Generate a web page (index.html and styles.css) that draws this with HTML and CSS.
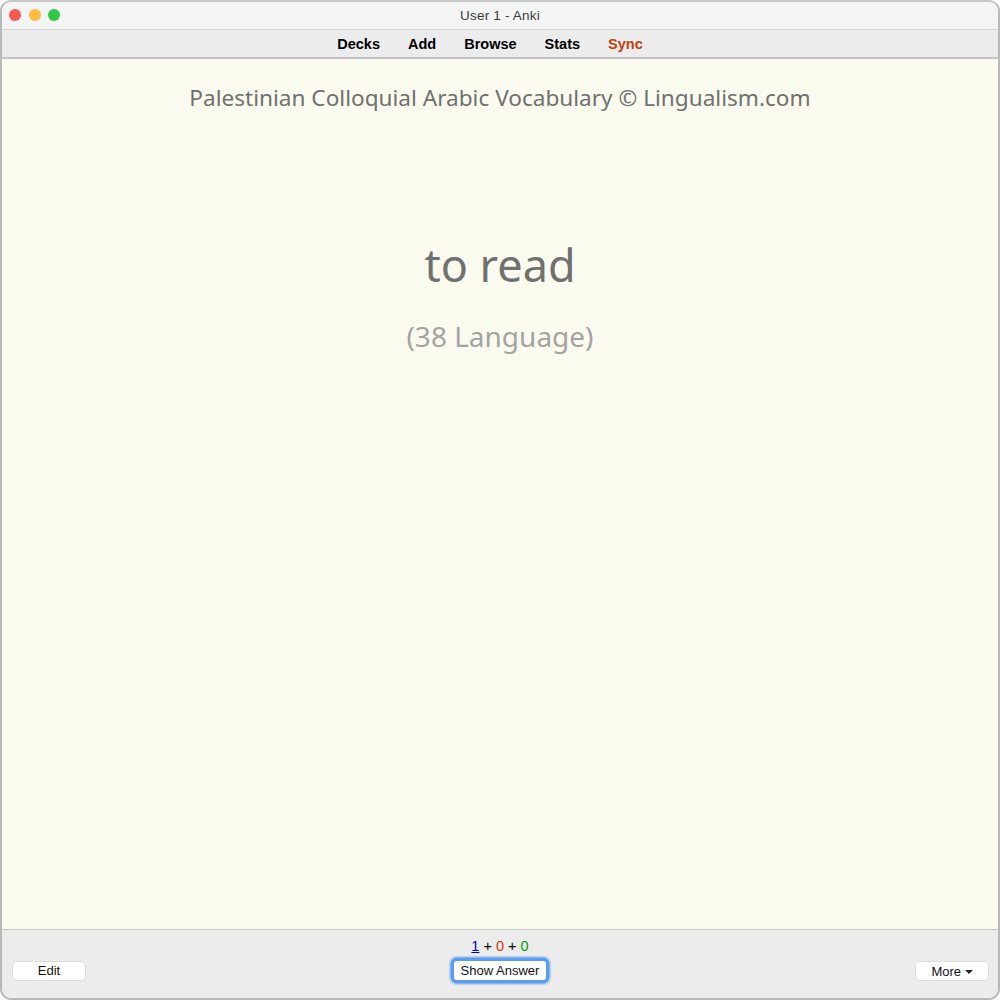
FILE: index.html
```html
<!DOCTYPE html>
<html lang="en">
<head>
  <meta charset="UTF-8">
  <title>User 1 - Anki</title>
  <link rel="stylesheet" href="styles.css">
</head>
<body>
  <div class="window">
    <div class="titlebar">
      <div class="lights">
        <span class="light red"></span>
        <span class="light yellow"></span>
        <span class="light green"></span>
      </div>
      <div class="title">User 1 - Anki</div>
    </div>
    <div class="menu">
      <a>Decks</a>
      <a>Add</a>
      <a>Browse</a>
      <a>Stats</a>
      <a class="sync">Sync</a>
    </div>
    <div class="card">
      <div class="source">Palestinian Colloquial Arabic Vocabulary © Lingualism.com</div>
      <div class="word">to read</div>
      <div class="tag">(38 Language)</div>
    </div>
    <div class="bottom">
      <div class="side"><button class="btn edit">Edit</button></div>
      <div class="middle">
        <div class="counts"><u class="new">1</u> + <span class="lrn">0</span> + <span class="rev">0</span></div>
        <button class="btn answer">Show Answer</button>
      </div>
      <div class="side right"><button class="btn">More <span class="caret"></span></button></div>
    </div>
  </div>
</body>
</html>
```

FILE: styles.css
```css
html, body {
  margin: 0;
  height: 100%;
  background: #fff;
}

.window {
  box-sizing: border-box;
  height: 1000px;
  display: flex;
  flex-direction: column;
  border: 2px solid #b9b9b9;
  border-top-color: #c9c9c9;
  border-radius: 11px;
  overflow: hidden;
  font-family: "Liberation Sans", Arial, sans-serif;
  color: #000;
}

.titlebar {
  height: 27px;
  background: #f3f4f4;
  border-bottom: 1px solid #d6d6d6;
  position: relative;
  display: flex;
  align-items: center;
  justify-content: center;
}

.lights {
  position: absolute;
  left: 7px;
  top: 7px;
  display: flex;
  gap: 7.5px;
}

.light {
  width: 12px;
  height: 12px;
  border-radius: 50%;
}

.red { background: #fc5753; }
.yellow { background: #fdbc40; }
.green { background: #33c748; }

.title {
  font-size: 13.5px;
  color: #3c3c3c;
  letter-spacing: 0.2px;
  margin-top: -1px;
}

.menu {
  height: 27px;
  background: #ececec;
  border-bottom: 2px solid #c4c4c4;
  display: flex;
  align-items: center;
  justify-content: center;
  gap: 28px;
  padding-right: 20px;
  font-size: 14.5px;
  font-weight: bold;
}

.sync { color: #c43c0c; }

.card {
  flex: 1;
  background: #fafbee;
  text-align: center;
  font-family: "Noto Sans", sans-serif;
  color: #707070;
}

.source {
  margin-top: 23px;
  font-size: 22.6px;
  line-height: 32px;
}

.word {
  margin-top: 121px;
  font-size: 45px;
  line-height: 60px;
}

.tag {
  margin-top: 23px;
  font-size: 28px;
  line-height: 36px;
  color: #a3a3a3;
}

.bottom {
  box-sizing: border-box;
  height: 69px;
  background: #ececec;
  border-top: 1px solid #c8c8c8;
  display: flex;
  justify-content: space-between;
  align-items: flex-end;
  padding: 0 9px 17px 10px;
}

.side {
  width: 100px;
  display: flex;
}

.right {
  width: 101px;
  justify-content: flex-end;
}

.middle {
  display: flex;
  flex-direction: column;
  align-items: center;
  gap: 4px;
  margin-bottom: 1px;
}

.counts {
  font-size: 14.5px;
  line-height: 16px;
}

.new { color: #0000a8; }
.lrn { color: #c43c0c; }
.rev { color: #00a000; }

.btn {
  box-sizing: border-box;
  width: 74px;
  height: 20px;
  padding: 0;
  background: #fff;
  border: 1px solid #dcdcdc;
  border-radius: 5px;
  font-family: "Liberation Sans", Arial, sans-serif;
  font-size: 13px;
  color: #111;
}

.edit { padding-bottom: 2px; }

.answer {
  width: 92px;
  height: 19px;
  border: none;
  border-radius: 3px;
  box-shadow: 0 0 0 3.5px #5a9cf0, 0 0 1px 4.5px rgba(90, 156, 240, 0.35);
  margin-top: 3px;
}

.caret {
  display: inline-block;
  vertical-align: middle;
  margin-left: 0;
  border-top: 4px solid #222;
  border-left: 4px solid transparent;
  border-right: 4px solid transparent;
}
```
